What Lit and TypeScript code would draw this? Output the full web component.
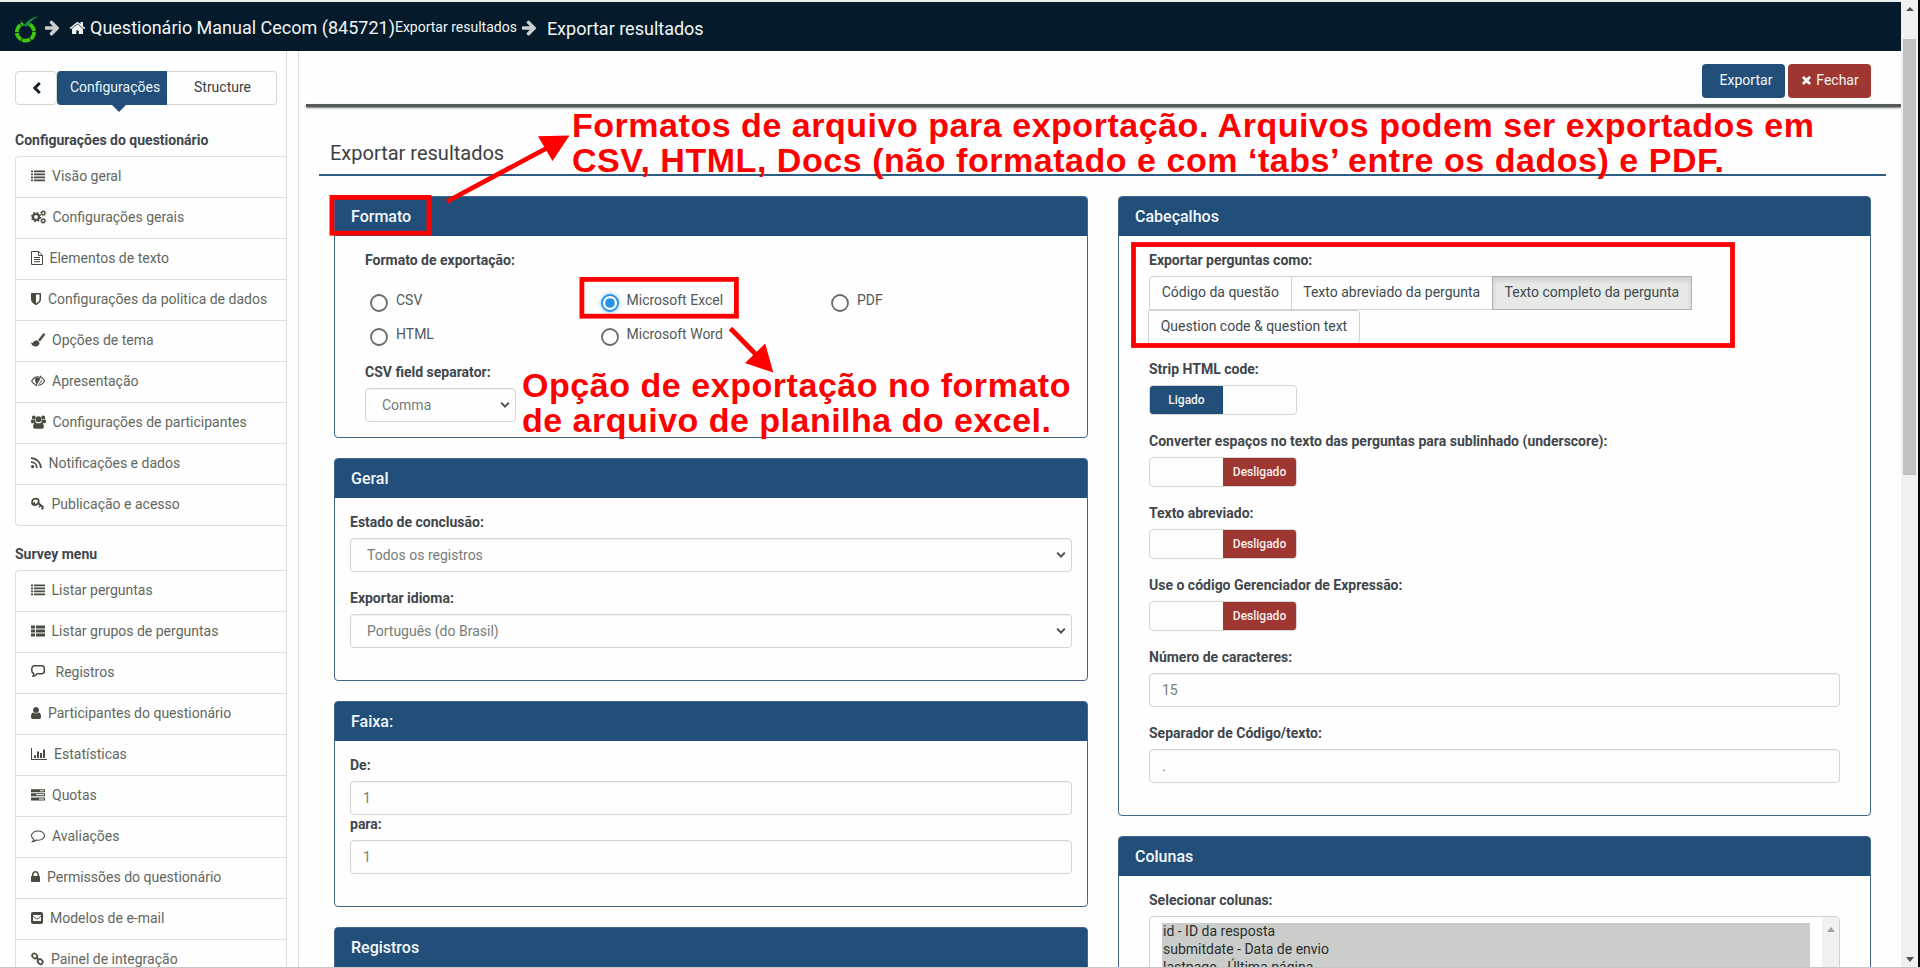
import { LitElement, html, svg, css, nothing } from "lit";

// Glyphs designed on a 1792-unit grid, 128 units to the pixel
const fa = (d: string, dx = 0) =>
  svg`<path fill="currentColor" transform="translate(${dx} 0) scale(.0078125)" d=${d}></path>`;

const HOME =
  "M1472 992v480q0 26-19 45t-45 19h-384v-384h-256v384h-384q-26 0-45-19t-19-45v-480q0-1 .5-3t.5-3l575-474 575 474q1 2 1 6zm223-69l-62 74q-8 9-21 11h-3q-13 0-21-7l-692-577-692 577q-12 8-24 7-13-2-21-11l-62-74q-8-10-7-23.5t11-21.5l719-599q32-26 76-26t76 26l244 204v-195q0-14 9-23t23-9h192q14 0 23 9t9 23v408l219 182q10 8 11 21.5t-7 23.5z";
const ARROW =
  "M1600 960q0 54-37 91l-651 651q-39 37-91 37-51 0-90-37l-75-75q-38-38-38-91t38-91l293-293h-704q-52 0-84.5-37.5t-32.5-90.5v-128q0-53 32.5-90.5t84.5-37.5h704l-293-294q-38-36-38-90t38-90l75-75q38-38 90-38 53 0 91 38l651 651q37 35 37 90z";
const TIMES =
  "M1490 1322q0 40-28 68l-136 136q-28 28-68 28t-68-28l-294-294-294 294q-28 28-68 28t-68-28l-136-136q-28-28-28-68t28-68l294-294-294-294q-28-28-28-68t28-68l136-136q28-28 68-28t68 28l294 294 294-294q28-28 68-28t68 28l136 136q28 28 28 68t-28 68l-294 294 294 294q28 28 28 68z";
const USER =
  "M1536 1399q0 109-62.5 187t-150.5 78h-854q-88 0-150.5-78t-62.5-187q0-85 8.5-160.5t31.5-152 58.5-131 94-89 134.5-34.5q131 128 313 128t313-128q76 0 134.5 34.5t94 89 58.5 131 31.5 152 8.5 160.5zm-256-887q0 159-112.5 271.5t-271.5 112.5-271.5-112.5-112.5-271.5 112.5-271.5 271.5-112.5 271.5 112.5 112.5 271.5z";
const LOCK =
  "M640 768h512v-192q0-106-75-181t-181-75-181 75-75 181v192zm832 96v576q0 40-28 68t-68 28h-960q-40 0-68-28t-28-68v-576q0-40 28-68t68-28h32v-192q0-184 132-316t316-132 316 132 132 316v192h32q40 0 68 28t28 68z";
const SHIELD =
  "M1344 960v-640h-448v1137q119-63 213-137 235-184 235-360zm192-768v768q0 86-33.5 170.5t-83 150-118 127.5-126.5 103-121 77.5-89.5 49.5-42.5 20q-12 6-26 6t-26-6q-16-7-42.5-20t-89.5-49.5-121-77.5-126.5-103-118-127.5-83-150-33.5-170.5v-768q0-26 19-45t45-19h1152q26 0 45 19t19 45z";

const icons: Record<string, unknown> = {
  list: svg`<path fill="currentColor" d="M0 1.500h2v1.800H0zM0 4.500h2v1.800H0zM0 7.500h2v1.800H0zM0 10.500h2v1.800H0zM3 1.500h11v1.800H3zM3 4.500h11v1.800H3zM3 7.500h11v1.800H3zM3 10.500h11v1.800H3z"></path>`,
  thlist: svg`<path fill="currentColor" d="M0 1.500h4v3H0zM0 5.500h4v3H0zM0 9.500h4v3H0zM5 1.500h9v3H5zM5 5.500h9v3H5zM5 9.500h9v3H5z"></path>`,
  cogs: svg`<g fill="none" stroke="currentColor"><circle cx="5" cy="7" r="3" stroke-width="2.200"></circle><circle cx="5" cy="7" r="4.500" stroke-width="1.200" stroke-dasharray="1.770 1.770"></circle><circle cx="12.200" cy="3.200" r="1.700" stroke-width="1.300"></circle><circle cx="12.200" cy="3.200" r="2.700" stroke-width=".7" stroke-dasharray="1.060 1.060"></circle><circle cx="12.200" cy="10.800" r="1.700" stroke-width="1.300"></circle><circle cx="12.200" cy="10.800" r="2.700" stroke-width=".7" stroke-dasharray="1.060 1.060"></circle></g>`,
  file: svg`<path fill="none" stroke="currentColor" stroke-linejoin="round" d="M.5.5h7.200l3.800 3.800v9.200H.5zM7.500.5v4h4M3 6.500h6M3 8.500h6M3 10.700h6"></path>`,
  shield: fa(SHIELD, -2),
  brush: svg`<path fill="currentColor" d="M13.600.4c.6.5.4 1.300 0 2L9 8.600 7 7 11.800.9c.5-.6 1.200-.9 1.800-.5zM6.300 7.400l2.100 1.900c.5 2.600-1.600 4.200-4.100 4.200C1.500 13.500.3 11.500 0 9.300c1 .7 1.600.9 2.200.3C3.100 8 4.500 7 6.300 7.400z"></path>`,
  eye: svg`<g fill="none" stroke="currentColor"><path d="M8.500 3C5 2.400 2.200 4.200.6 7c1 1.700 2.300 3 4 3.700M10.500 3.600c1.400.8 2.300 2 3.100 3.400-1.500 2.700-3.700 4.200-6.600 4.300" stroke-width="1.100"></path><path d="M10 1.800L4.700 12.200" stroke-width="1.300"></path><path d="M4 5.500c0 1.700.5 3.100 1.600 3.900L8.300 4C6 3.200 4.300 3.800 4 5.500z" fill="currentColor" stroke="none"></path><path d="M10.400 6c.2 1.700-.7 3-2.200 3.500" stroke-width="1"></path></g>`,
  users: svg`<g fill="currentColor"><circle cx="2.800" cy="2.400" r="1.900"></circle><circle cx="12.200" cy="2.400" r="1.900"></circle><circle cx="7.500" cy="4.200" r="2.900"></circle><path d="M0 6.500C0 5 .6 4.200 1.500 4.400c1 .5 1.700.4 2.700 0 0 1.500.3 2.300 1 3C3.500 7.600 3 7.900 2.300 8.300H1.200C.4 8.300 0 7.800 0 6.500zM15 6.500c0-1.500-.6-2.300-1.500-2.100-1 .5-1.700.4-2.700 0 0 1.500-.3 2.300-1 3 1.700.2 2.200.5 2.900.9h1.100c.8 0 1.200-.5 1.200-1.800z"></path><path d="M2.200 12c0-2.600.6-4.600 2.400-4.600 1.800 1.200 4 1.200 5.800 0 1.800 0 2.400 2 2.400 4.600 0 1.100-.7 1.700-1.700 1.700H3.900c-1 0-1.700-.6-1.700-1.700z"></path></g>`,
  rss: svg`<circle cx="1.600" cy="10.600" r="1.600" fill="currentColor"></circle><path fill="none" stroke="currentColor" stroke-width="1.700" d="M0 6.200c3.300 0 5.800 2.500 5.900 5.900M0 2.200c5.600 0 9.800 4.200 9.900 9.900"></path>`,
  key: svg`<path fill="none" stroke="currentColor" stroke-width="1.800" d="M7.700 4.700C7.900 2.600 6.600 1.500 5 1.600 2.600 1.700 1 3.500 1 5.700 1 7.300 2.200 8.300 3.900 8.100 6 7.900 7.500 6.800 7.700 4.700zM2 7.200l2-1.800M6.900 5.800l5.600 4.700M8.200 10.300l1.700-2.200M10.600 12.400l1.900-2.300"></path>`,
  comment2: svg`<path fill="none" stroke="currentColor" stroke-width="1.500" stroke-linejoin="round" d="M3.500.8h7.200c1.800 0 2.600 1.300 2.600 3v1.900c0 1.800-.8 3-2.600 3H6.200c-1 1.500-2.600 2.300-4.300 2.600.7-.8.9-1.700.9-2.800C1.400 8.100.8 7.200.8 5.700V3.800c0-1.700.9-3 2.700-3z"></path>`,
  user: fa(USER, -2),
  chart: svg`<path fill="currentColor" d="M0 1h1v11h15v1H0zM3 8.300h2V11H3zM6 4.500h2V11H6zM9 6h2v5H9zM12 2.500h2V11h-2z"></path>`,
  tasks: svg`<path fill="currentColor" fill-rule="evenodd" d="M0 1.200h14v3H0zM0 5.300h14v3H0zM0 9.400h14v3H0zM9 2.200v1h4v-1zM5 6.300v1h8v-1zM8 10.400v1h5v-1z"></path>`,
  comment: svg`<path fill="none" stroke="currentColor" stroke-width="1.100" d="M7 2c3.700 0 6.500 2 6.500 4.600S10.700 11.200 7 11.200c-.6 0-1.200-.1-1.700-.2-1 .9-2.300 1.500-3.800 1.700.7-.7 1.200-1.500 1.300-2.500C1.400 9.400.5 8.100.5 6.600.5 4 3.300 2 7 2z"></path>`,
  lock: fa(LOCK, -2.5),
  mail: svg`<path fill="currentColor" fill-rule="evenodd" d="M2.200 1h7.600C11.200 1 12 1.800 12 3.200v7.600c0 1.400-.8 2.200-2.200 2.200H2.200C.8 13 0 12.200 0 10.800V3.200C0 1.800.8 1 2.200 1zM2 4v6h8V4z"></path><path d="M2 5.200L5 7.600q1 .7 2 0l3-2.400" fill="none" stroke="currentColor" stroke-width=".9"></path>`,
  link: svg`<g fill="none" stroke="currentColor" stroke-width="1.700"><rect x="-2.700" y="-2.100" width="5.400" height="4.200" rx="2" transform="translate(3.700 4) rotate(45)"></rect><rect x="-2.700" y="-2.100" width="5.400" height="4.200" rx="2" transform="translate(9.200 9.600) rotate(45)"></rect><path d="M4.800 5.200L8 8.500"></path></g>`,
};

type Item = [icon: string, label: string, iconSpace: number];

const SETTINGS: Item[] = [
  ["list", "Visão geral", 21],
  ["cogs", "Configurações gerais", 21.5],
  ["file", "Elementos de texto", 18.5],
  ["shield", "Configurações da politica de dados", 17],
  ["brush", "Opções de tema", 21],
  ["eye", "Apresentação", 21],
  ["users", "Configurações de participantes", 21.5],
  ["rss", "Notificações e dados", 17.5],
  ["key", "Publicação e acesso", 20.5],
];

const SURVEY: Item[] = [
  ["list", "Listar perguntas", 20.5],
  ["thlist", "Listar grupos de perguntas", 20.5],
  ["comment2", "Registros", 24.5],
  ["user", "Participantes do questionário", 17],
  ["chart", "Estatísticas", 23],
  ["tasks", "Quotas", 21],
  ["comment", "Avaliações", 21],
  ["lock", "Permissões do questionário", 16],
  ["mail", "Modelos de e-mail", 19],
  ["link", "Painel de integração", 20],
];

class SideMenu extends LitElement {
  static properties = { heading: {}, items: { attribute: false } };
  declare heading: string;
  declare items: Item[];
  static styles = css`
    :host { display: block; }
    h4 { margin: 0; height: 26px; font-size: 14px; line-height: 20px; font-weight: 700; color: #41464e; }
    .list { border: 1px solid #dcdfdc; border-right: 0; border-radius: 4px 0 0 4px; }
    .item { display: flex; align-items: center; height: 40px; box-sizing: content-box; padding-left: 15px; color: #62675f; white-space: nowrap; }
    .item span { margin-top: -2px; }
    .item + .item { border-top: 1px solid #dcdfdc; }
    .item svg { color: #474c40; height: 14px; overflow: visible; flex: none; margin-top: -3px; }
  `;
  render() {
    return html`<h4>${this.heading}</h4>
      <div class="list">
        ${this.items.map(
          ([icon, label, w]) => html`<div class="item">
            <svg style="width:${w}px">${icons[icon]}</svg><span>${label}</span>
          </div>`
        )}
      </div>`;
  }
}
customElements.define("side-menu", SideMenu);

class FormPanel extends LitElement {
  static properties = { heading: {} };
  declare heading: string;
  static styles = css`
    :host { display: block; border: 1px solid #41678c; border-radius: 4px; margin-bottom: 20px; background: #fdfefd; }
    .head { height: 39px; box-sizing: border-box; padding: 0 16px; line-height: 39px; font-size: 16px; font-weight: 500; color: #f4f8fb; background: #214f79; border-radius: 2px 2px 0 0; }
  `;
  render() {
    return html`<div class="head">${this.heading}</div><slot></slot>`;
  }
}
customElements.define("form-panel", FormPanel);

class AppRoot extends LitElement {
  static styles = css`
    :host { display: block; position: relative; width: 1920px; height: 968px; overflow: hidden; background: #fdfefd; font: 14px/20px Roboto, "Liberation Sans", sans-serif; color: #3a3f42; }
    * { box-sizing: border-box; }
    svg { display: block; flex: none; }
    .window { display: grid; grid-template-columns: 1901px 17px 2px; height: 968px; }
    .page { display: flex; flex-direction: column; min-width: 0; height: 968px; border-top: 2px solid #e9eeee; overflow: hidden; }
    .nav { display: flex; flex: none; height: 49px; background: #051b2b; color: #f2f4f5; align-items: center; padding: 2px 0 0 15px; font-size: 18px; white-space: nowrap; }
    .nav .small { font-size: 14px; margin: -2px 4px 0 0; }
    .nav .last { margin: 2px 0 0 10px; }
    .logo { width: 24px; height: 28px; margin: 2px 5px 0 0; }
    .arrow { color: #cbcfd0; }
    .house { margin: 0 4px 0 9px; }
    .body { display: flex; flex: 1; min-height: 0; }
    .side { width: 287px; flex: none; border-right: 1px solid #d9dcd9; padding: 20px 0 0 15px; overflow: hidden; }
    .tabs { display: flex; height: 34px; width: 263px; line-height: 32px; text-align: center; }
    .tab { border: 1px solid #d5d8d5; border-left: 0; flex: 0 0 110px; border-radius: 0 4px 4px 0; padding-left: 2px; line-height: 31px; }
    .tab.back { flex-basis: 42px; border-left: 1px solid #d5d8d5; border-radius: 4px; display: flex; align-items: center; justify-content: center; color: #111d27; }
    .tab.on { background: #214f79; border-color: #214f79; color: #eef3f7; border-radius: 4px 0 0 4px; padding-left: 7px; display: flex; flex-direction: column; align-items: center; line-height: 32px; }
    .tab.on span { margin-top: -1px; }
    .tab.on::after { content: ""; flex: none; margin: 1px 0 0 8px; border: 8px solid transparent; border-top-color: #214f79; border-bottom: 0; }
    .menu1 { margin-top: 25px; }
    .menu2 { margin-top: 18px; }
    .split { width: 12px; flex: none; border-right: 1px solid #d9dcd9; }
    .main { flex: 1; min-width: 0; display: flex; flex-direction: column; }
    .actions { display: flex; flex: none; justify-content: flex-end; gap: 3px; height: 53px; padding: 13px 30px 0 0; }
    .rule { flex: none; height: 3px; margin-left: 7px; background: #555a5b; box-shadow: 0 1px 2px #777; }
    .btn { height: 34px; width: 83px; border-radius: 4px; color: #f4f7f9; display: flex; align-items: center; justify-content: center; background: #214f79; padding-bottom: 2px; }
    .btn.export { padding-left: 5px; }
    .btn.close { background: #9e3631; gap: 3px; }
    .title { flex: none; margin: 35px 15px 0 20px; height: 34px; padding: 0 0 0 11px; border-bottom: 2px solid #2d5c84; font-size: 20px; line-height: 22px; color: #3d4142; }
    .cols { display: flex; gap: 30px; margin: 20px 30px 0 35px; align-items: flex-start; }
    .left { width: 754px; flex: none; }
    .right { width: 753px; flex: none; }
    .pad { padding: 15px 15px 32px; }
    .pad.wide { padding-left: 30px; padding-right: 30px; }
    .pad.fmt { padding-bottom: 15px; }
    .label { display: block; height: 20px; line-height: 18px; margin-bottom: 5px; font-weight: 700; color: #41464c; white-space: nowrap; }
    .gap { margin-top: 17px; }
    .near { margin-top: 0; }
    .ctl { height: 34px; border: 1px solid #d3d6d3; border-radius: 4px; padding: 0 12px; display: flex; align-items: center; justify-content: space-between; color: #787c79; box-shadow: inset 0 1px 1px rgba(0,0,0,.06); }
    .ctl.sel { padding: 0 5px 0 16px; }
    .ctl.short { width: 151px; }
    .radios { display: grid; grid-template-columns: 230.5px 230.5px 230px; row-gap: 4px; padding: 14px 0 0 5px; height: 87px; align-content: start; }
    .radio { display: flex; height: 30px; gap: 8px; color: #54595a; line-height: 20px; }
    .radio svg { margin-top: 4px; overflow: visible; }
    .glow { filter: drop-shadow(0 0 2px #7cc0f5); }
    .choices { display: flex; flex-wrap: wrap; height: 67px; align-content: flex-start; }
    .choice { height: 34px; border: 1px solid #d0d3d0; padding: 0 11.7px; line-height: 31px; color: #3e4a50; white-space: nowrap; margin-left: -1px; }
    .choice:first-child { margin-left: 0; border-radius: 4px 0 0 0; }
    .choice.on { background: #e7e9e7; border-color: #aeb2ae; box-shadow: inset 0 3px 5px rgba(0,0,0,.125); }
    .choice.end { border-radius: 0 4px 4px 0; }
    .switch { display: flex; width: 148px; height: 30px; border: 1px solid #d3d6d3; border-radius: 4px; font-size: 12px; font-weight: 500; line-height: 28px; text-align: center; overflow: hidden; color: #f5f0ef; }
    .half { flex: 1; }
    .half.yes { background: #214f79; }
    .half.no { background: #9e3631; }
    .listbox { display: flex; height: 120px; border: 1px solid #cfd2cf; border-radius: 4px; padding: 6px 0 0 12px; color: #2a2e2e; line-height: 18px; }
    .opts { width: 648px; background: #cbcdca; padding-left: 1px; margin-right: 12px; }
    .opts div { height: 18px; line-height: 17px; }
    .lbar { flex: 1; background: #f0f1ef; margin: -6px 0 0; padding: 10px 0 0 5px; }
    .bar { background: #f0f1ef; display: flex; flex-direction: column; align-items: center; padding: 7px 0 6px; }
    .thumb { width: 13px; height: 436px; margin-top: 28px; background: #c0c2bf; }
    .bar .down { margin-top: auto; }
    .edge { background: #050505; }
    .notes { position: absolute; left: 0; top: 0; width: 1920px; height: 968px; }
    .note { font: 700 34px "Liberation Sans", Arial, sans-serif; fill: #fe0000; }
    .foot { position: absolute; left: 0; right: 0; bottom: 0; height: 1px; background: #c4c7c5; }
  `;

  private select(value: string, short = false) {
    return html`<div class="ctl sel ${short ? "short" : ""}">
      <span>${value}</span>
      <svg width="10" height="8"><path d="M1.200 1.600L5 5.600l3.800-4" fill="none" stroke="#4c504f" stroke-width="2"></path></svg>
    </div>`;
  }

  private radio(label: string, on = false) {
    return html`<div class="radio">
      <svg width="18" height="18" class=${on ? "glow" : ""}>
        <circle cx="9" cy="9" r="8" fill="#fdfefd" stroke=${on ? "#2592e8" : "#676b6a"} stroke-width="1.800"></circle>
        ${on ? svg`<circle cx="9" cy="9" r="4.800" fill="#2592e8"></circle>` : nothing}
      </svg>
      <span>${label}</span>
    </div>`;
  }

  private toggle(label: string, on: boolean) {
    return html`<span class="label gap">${label}</span>
      <div class="switch">
        <span class="half ${on ? "yes" : ""}">${on ? "Ligado" : nothing}</span>
        <span class="half ${on ? "" : "no"}">${on ? nothing : "Desligado"}</span>
      </div>`;
  }

  private arrow() {
    return html`<svg class="arrow" width="16" height="16" viewBox="0.500 1 12.500 13">${fa(ARROW)}</svg>`;
  }

  render() {
    return html`
      <div class="window">
        <div class="page">
          <div class="nav">
            <svg class="logo" viewBox="0 0 24 28">
              <circle cx="10.500" cy="17" r="8.600" fill="none" stroke="#3fc40f" stroke-width="3.800" stroke-dasharray="8.200 .8" transform="rotate(-62 10.500 17)"></circle>
              <path d="M5 4h11.500l-6 8.500z" fill="#051b2b"></path>
              <path d="M3.500 4.800q4 1.500 6.200 4.400Q15 2.800 23.500 1.200 15.500 5.500 10.500 12 8 7.500 3.500 4.800z" fill="#12914a"></path>
            </svg>
            ${this.arrow()}
            <svg class="house" width="17" height="18" viewBox="0 0 14 14">${fa(HOME)}</svg>
            <span>Questionário Manual Cecom (845721)</span>
            <span class="small">Exportar resultados</span>
            ${this.arrow()}
            <span class="last">Exportar resultados</span>
          </div>
          <div class="body">
            <div class="side">
              <div class="tabs">
                <div class="tab back">
                  <svg width="10" height="14"><path d="M7.800 2L2.800 7l5 5" fill="none" stroke="currentColor" stroke-width="2.800"></path></svg>
                </div>
                <div class="tab on"><span>Configurações</span></div>
                <div class="tab">Structure</div>
              </div>
              <side-menu class="menu1" heading="Configurações do questionário" .items=${SETTINGS}></side-menu>
              <side-menu class="menu2" heading="Survey menu" .items=${SURVEY}></side-menu>
            </div>
            <div class="split"></div>
            <div class="main">
              <div class="actions">
                <div class="btn export">Exportar</div>
                <div class="btn close"><svg width="13" height="14" viewBox="0 0 14 14">${fa(TIMES)}</svg>Fechar</div>
              </div>
              <div class="rule"></div>
              <div class="title">Exportar resultados</div>
              <div class="cols">
                <div class="left">
                  <form-panel heading="Formato">
                    <div class="pad wide fmt">
                      <span class="label">Formato de exportação:</span>
                      <div class="radios">
                        ${this.radio("CSV")} ${this.radio("Microsoft Excel", true)} ${this.radio("PDF")}
                        ${this.radio("HTML")} ${this.radio("Microsoft Word")}
                      </div>
                      <span class="label near">CSV field separator:</span>
                      ${this.select("Comma", true)}
                    </div>
                  </form-panel>
                  <form-panel heading="Geral">
                    <div class="pad">
                      <span class="label">Estado de conclusão:</span>
                      ${this.select("Todos os registros")}
                      <span class="label gap">Exportar idioma:</span>
                      ${this.select("Português (do Brasil)")}
                    </div>
                  </form-panel>
                  <form-panel heading="Faixa:">
                    <div class="pad">
                      <span class="label">De:</span>
                      <div class="ctl">1</div>
                      <span class="label near">para:</span>
                      <div class="ctl">1</div>
                    </div>
                  </form-panel>
                  <form-panel heading="Registros"><div class="pad"></div></form-panel>
                </div>
                <div class="right">
                  <form-panel heading="Cabeçalhos">
                    <div class="pad wide">
                      <span class="label">Exportar perguntas como:</span>
                      <div class="choices">
                        <span class="choice">Código da questão</span>
                        <span class="choice">Texto abreviado da pergunta</span>
                        <span class="choice on">Texto completo da pergunta</span>
                        <span class="choice end">Question code &amp; question text</span>
                      </div>
                      ${this.toggle("Strip HTML code:", true)}
                      ${this.toggle("Converter espaços no texto das perguntas para sublinhado (underscore):", false)}
                      ${this.toggle("Texto abreviado:", false)}
                      ${this.toggle("Use o código Gerenciador de Expressão:", false)}
                      <span class="label gap">Número de caracteres:</span>
                      <div class="ctl">15</div>
                      <span class="label gap">Separador de Código/texto:</span>
                      <div class="ctl">.</div>
                    </div>
                  </form-panel>
                  <form-panel heading="Colunas">
                    <div class="pad wide">
                      <span class="label">Selecionar colunas:</span>
                      <div class="listbox">
                        <div class="opts">
                          <div>id - ID da resposta</div>
                          <div>submitdate - Data de envio</div>
                          <div>lastpage - Última página</div>
                        </div>
                        <div class="lbar"><svg width="8" height="5"><path d="M0 5L4 0l4 5z" fill="#a0a3a0"></path></svg></div>
                      </div>
                    </div>
                  </form-panel>
                </div>
              </div>
            </div>
          </div>
        </div>
        <div class="bar">
          <svg width="8" height="4"><path d="M0 4L4 0l4 4z" fill="#505352"></path></svg>
          <div class="thumb"></div>
          <svg class="down" width="8" height="5"><path d="M0 0h8L4 5z" fill="#505352"></path></svg>
        </div>
        <div class="edge"></div>
      </div>
      <svg class="notes" viewBox="0 0 1920 968">
        <g fill="none" stroke="#fe0000" stroke-width="4.800">
          <rect x="331.900" y="197.400" width="97" height="35.800"></rect>
          <rect x="581.900" y="279.400" width="154.500" height="36.800"></rect>
          <rect x="1133.500" y="244.500" width="599" height="101"></rect>
          <path d="M447 201.500L547 148"></path>
          <path d="M730.500 328.500L757 355.500"></path>
        </g>
        <path d="M569.500 135.500L538 136.300 552.500 161zM773.300 372.500L765.200 343.500 745 363z" fill="#fe0000"></path>
        <text class="note" x="572" y="137" textLength="1242">Formatos de arquivo para exportação. Arquivos podem ser exportados em</text>
        <text class="note" x="572" y="172" textLength="1152">CSV, HTML, Docs (não formatado e com ‘tabs’ entre os dados) e PDF.</text>
        <text class="note" x="522" y="397" textLength="548.500">Opção de exportação no formato</text>
        <text class="note" x="522" y="432" textLength="529">de arquivo de planilha do excel.</text>
      </svg>
      <div class="foot"></div>
    `;
  }
}
customElements.define("app-root", AppRoot);
